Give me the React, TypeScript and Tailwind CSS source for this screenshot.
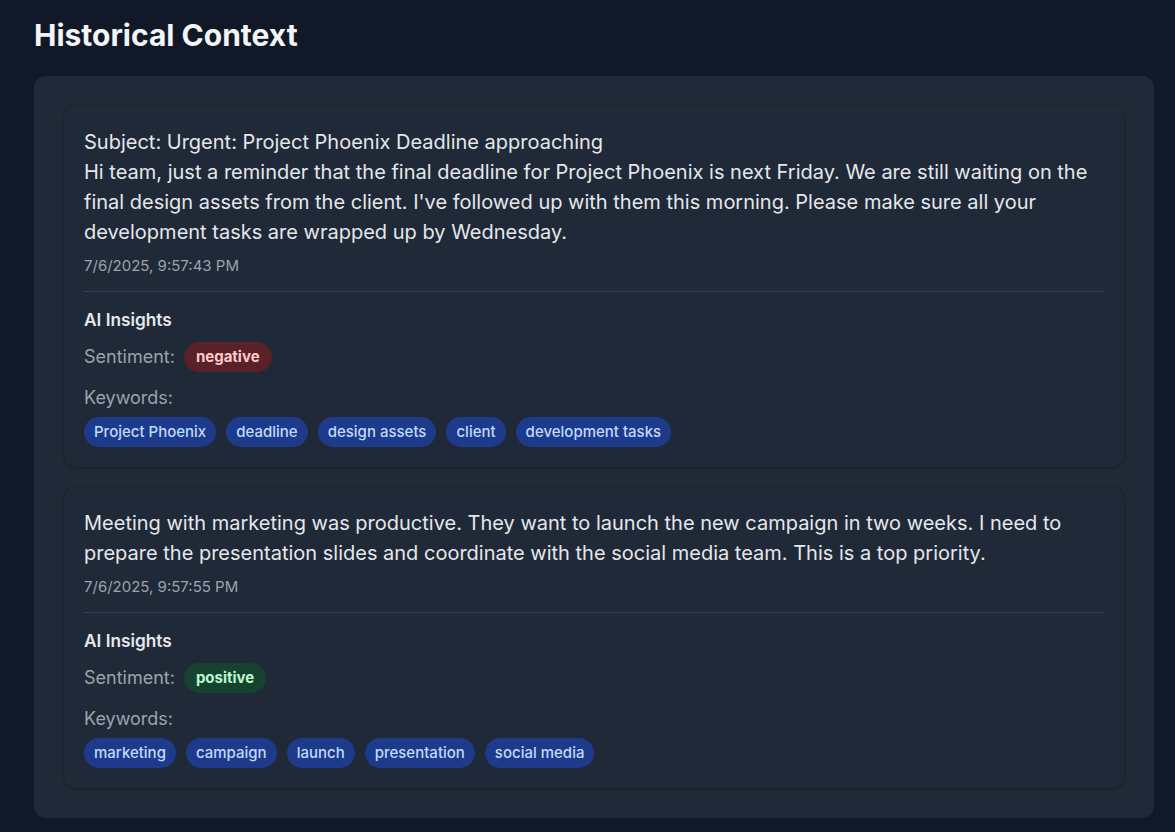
import React from "react";

type Entry = {
  text: React.ReactNode;
  time: string;
  sentiment: "negative" | "positive";
  keywords: string[];
};

const entries: Entry[] = [
  {
    text: (
      <>
        Subject: Urgent: Project Phoenix Deadline approaching
        <br />
        Hi team, just a reminder that the final deadline for Project Phoenix is next Friday. We are still waiting on the
        final design assets from the client. I've followed up with them this morning. Please make sure all your
        development tasks are wrapped up by Wednesday.
      </>
    ),
    time: "7/6/2025, 9:57:43 PM",
    sentiment: "negative",
    keywords: ["Project Phoenix", "deadline", "design assets", "client", "development tasks"],
  },
  {
    text: (
      <>
        Meeting with marketing was productive. They want to launch the new campaign in two weeks. I need to prepare the
        presentation slides and coordinate with the social media team. This is a top priority.
      </>
    ),
    time: "7/6/2025, 9:57:55 PM",
    sentiment: "positive",
    keywords: ["marketing", "campaign", "launch", "presentation", "social media"],
  },
];

function Card({ e }: { e: Entry }) {
  return (
    <div className="rounded-xl bg-[#1f2937] px-5 pt-[21px] pb-[20px] shadow-[0_0_0_1px_rgba(0,0,0,0.07),0_1px_3px_rgba(0,0,0,0.2)]">
      <p className="text-[20px] leading-[30px] text-[#e5e7eb]">{e.text}</p>
      <div className="mt-[9px] text-[15px] leading-5 text-[#9ca3af]">{e.time}</div>
      <div className="mt-[15px] border-t border-[#374151] pt-[15px]">
        <div className="text-[17.25px] font-semibold leading-[26px] text-[#e5e7eb]">AI Insights</div>
        <div className="mt-[9px] flex items-center gap-[9px]">
          <span className="text-[18px] leading-7 text-[#9ca3af]">Sentiment:</span>
          {e.sentiment === "negative" ? (
            <span className="rounded-full bg-[#5a2128] px-3 py-[5px] text-[15px] font-bold leading-5 text-[#fecaca]">
              negative
            </span>
          ) : (
            <span className="rounded-full bg-[#16432f] px-3 py-[5px] text-[15px] font-bold leading-5 text-[#bbf7d0]">
              positive
            </span>
          )}
        </div>
        <div className="mt-3 text-[18px] leading-7 text-[#9ca3af]">Keywords:</div>
        <div className="mt-[5px] flex flex-wrap gap-2.5">
          {e.keywords.map((k) => (
            <span
              key={k}
              className="rounded-full bg-[#1e3a8a] px-2.5 py-[5px] text-[15px] font-medium leading-5 text-[#bfdbfe]"
            >
              {k}
            </span>
          ))}
        </div>
      </div>
    </div>
  );
}

export default function App() {
  return (
    <div
      className="min-h-[832px] bg-[#111827] px-[34px] pt-[17px] pb-[14px]"
      style={{ fontFamily: "Inter, 'Noto Sans', sans-serif" }}
    >
      <h1 className="text-[30px] font-bold leading-9 text-[#f3f4f6]">Historical Context</h1>
      <div className="mt-[23px] flex w-[1120px] flex-col gap-5 rounded-xl bg-[#1f2937] p-[30px]">
        {entries.map((e, i) => (
          <Card key={i} e={e} />
        ))}
      </div>
    </div>
  );
}
